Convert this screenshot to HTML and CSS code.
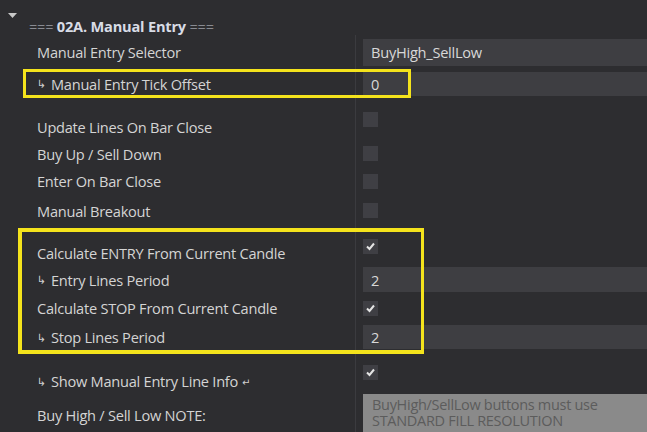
FILE: index.html
```html
<!DOCTYPE html>
<html lang="en">
<head>
    <meta charset="UTF-8">
    <meta name="viewport" content="width=device-width, initial-scale=1.0">
    <title>Properties - Manual Entry</title>
    <link rel="stylesheet" href="styles.css">
</head>
<body>
    <div class="grid">
        <div class="section-head">
            <svg class="caret" width="10" height="6" viewBox="0 0 10 6"><path d="M0 0 L9 0 L4.5 5 Z" fill="#c8c8c8"/></svg>
            <span class="title"><span class="eq">===</span> <b>02A. Manual Entry</b> <span class="eq">===</span></span>
        </div>

        <div class="row r-select">
            <div class="label">Manual Entry Selector</div>
            <div class="value"><div class="field tall">BuyHigh_SellLow</div></div>
        </div>
        <div class="row r-tick">
            <div class="label"><span class="sub">↳</span>Manual Entry Tick Offset</div>
            <div class="value"><div class="field">0</div></div>
        </div>

        <div class="row gap"><div class="label"></div><div class="value"></div></div>

        <div class="row r-update">
            <div class="label">Update Lines On Bar Close</div>
            <div class="value top"><span class="check"></span></div>
        </div>
        <div class="row r-buyup">
            <div class="label">Buy Up / Sell Down</div>
            <div class="value"><span class="check"></span></div>
        </div>
        <div class="row r-enter">
            <div class="label">Enter On Bar Close</div>
            <div class="value"><span class="check"></span></div>
        </div>
        <div class="row r-breakout">
            <div class="label">Manual Breakout</div>
            <div class="value"><span class="check"></span></div>
        </div>

        <div class="row gap"><div class="label"></div><div class="value"></div></div>

        <div class="row r-calc-entry">
            <div class="label">Calculate ENTRY From Current Candle</div>
            <div class="value top"><span class="check on"><svg width="15" height="15" viewBox="0 0 15 15"><path d="M4 7.5 L6.5 10 L11 4.5" fill="none" stroke="#e4e4e4" stroke-width="2"/></svg></span></div>
        </div>
        <div class="row r-entry-period">
            <div class="label"><span class="sub">↳</span>Entry Lines Period</div>
            <div class="value"><div class="field">2</div></div>
        </div>
        <div class="row r-calc-stop">
            <div class="label">Calculate STOP From Current Candle</div>
            <div class="value"><span class="check on"><svg width="15" height="15" viewBox="0 0 15 15"><path d="M4 7.5 L6.5 10 L11 4.5" fill="none" stroke="#e4e4e4" stroke-width="2"/></svg></span></div>
        </div>
        <div class="row r-stop-period">
            <div class="label"><span class="sub">↳</span>Stop Lines Period</div>
            <div class="value"><div class="field">2</div></div>
        </div>

        <div class="row gap"><div class="label"></div><div class="value"></div></div>

        <div class="row r-show">
            <div class="label"><span class="sub">↳</span>Show Manual Entry Line Info <span class="ret">↵</span></div>
            <div class="value top"><span class="check on"><svg width="15" height="15" viewBox="0 0 15 15"><path d="M4 7.5 L6.5 10 L11 4.5" fill="none" stroke="#e4e4e4" stroke-width="2"/></svg></span></div>
        </div>
        <div class="row r-note">
            <div class="label">Buy High / Sell Low NOTE:</div>
            <div class="value top"><div class="note">BuyHigh/SellLow buttons must use<br>STANDARD FILL RESOLUTION</div></div>
        </div>
    </div>

    <!-- annotation boxes -->
    <div class="mark mark-tick"></div>
    <div class="mark mark-calc"></div>
</body>
</html>
```

FILE: styles.css
```css
body {
    margin: 0;
    background-color: #2d2d30;
    font-family: "Open Sans", "Noto Sans", sans-serif;
    font-size: 14.6px;
    letter-spacing: -0.25px;
    color: #d4d4d4;
    overflow: hidden;
    height: 432px;
}
.grid {
    width: 647px;
}
.section-head {
    height: 35px;
    padding-left: 29px;
    padding-top: 16px;
    box-sizing: border-box;
    line-height: 20px;
    color: #d8dce6;
}
.section-head .title {
    white-space: pre;
}
.section-head b {
    font-weight: 700;
    letter-spacing: -0.2px;
}
.section-head .eq {
    font-weight: 300;
    color: #c8ccd6;
}
.caret {
    position: absolute;
    left: 8px;
    top: 13px;
}
.row {
    display: grid;
    grid-template-columns: 355px 1fr;
}
.label {
    padding-left: 37px;
    display: flex;
    align-items: center;
    white-space: nowrap;
}
.value {
    border-left: 1px solid #3b3b3f;
    padding-left: 7px;
    display: flex;
    align-items: center;
}
.value.top {
    align-items: flex-start;
}
.r-select { height: 34px; }
.r-tick { height: 29px; }
.gap { height: 14px; }
.r-update { height: 29px; }
.r-buyup { height: 25px; }
.r-enter { height: 30px; }
.r-breakout { height: 29px; }
.r-calc-entry { height: 28px; }
.r-entry-period { height: 25px; }
.r-calc-stop { height: 32px; }
.r-stop-period { height: 26px; }
.r-show { height: 30px; }
.r-show .label { padding-top: 4px; }
.r-show .check { margin-top: 1px; }
.r-note { height: 42px; }
.field {
    flex: 1;
    height: 24px;
    background-color: #3e3e42;
    display: flex;
    align-items: center;
    padding-left: 8px;
    color: #d8d8d8;
}
.r-entry-period .field {
    height: 25px;
}
.field.tall {
    height: 27px;
}
.check {
    width: 15px;
    height: 15px;
    background-color: #3f3f44;
    display: block;
}
.check svg {
    display: block;
}
.sub {
    font-family: "DejaVu Sans", sans-serif;
    font-size: 11px;
    margin-right: 5px;
    margin-top: 2px;
    color: #cfcfcf;
}
.ret {
    font-family: "DejaVu Sans", sans-serif;
    font-size: 10px;
    margin-left: 4px;
    margin-top: 2px;
    color: #cfcfcf;
}
.note {
    flex: 1;
    height: 42px;
    background-color: #8a8a8a;
    color: #5c5c5c;
    font-size: 14.5px;
    letter-spacing: -0.3px;
    line-height: 16px;
    padding: 3px 9px 0;
    box-sizing: border-box;
    white-space: nowrap;
    overflow: hidden;
}
.mark {
    position: absolute;
    border-style: solid;
    border-color: #f4e31c;
    box-sizing: border-box;
}
.mark-tick {
    left: 23px;
    top: 69px;
    width: 388px;
    height: 29px;
    border-width: 3px;
}
.mark-calc {
    left: 18px;
    top: 228px;
    width: 406px;
    height: 126px;
    border-width: 4px 3px 4px 4px;
}
```
